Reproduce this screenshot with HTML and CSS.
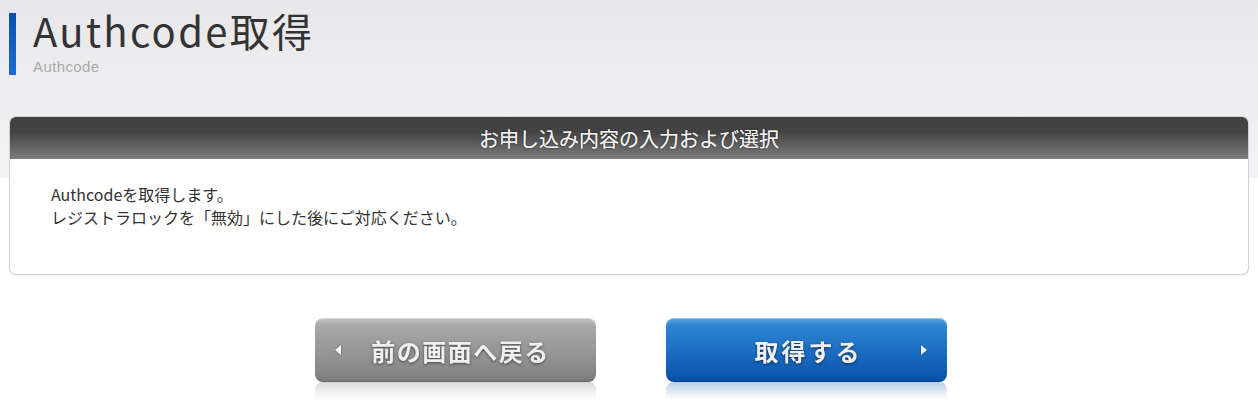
FILE: index.html
```html
<!DOCTYPE html>
<html lang="ja">
<head>
<meta charset="utf-8">
<title>Authcode取得</title>
<link rel="stylesheet" href="styles.css">
</head>
<body>
<div class="page">
  <header class="page-head">
    <div class="title-bar"></div>
    <div class="titles">
      <h1 class="title">Authcode取得</h1>
      <p class="subtitle">Authcode</p>
    </div>
  </header>

  <section class="panel">
    <h2 class="panel-head">お申し込み内容の入力および選択</h2>
    <div class="panel-body">
      <p>Authcodeを取得します。</p>
      <p>レジストラロックを「無効」にした後にご対応ください。</p>
    </div>
  </section>

  <div class="actions">
    <button class="btn btn-back" type="button">
      <svg class="arrow arrow-left" width="6" height="10" viewBox="0 0 6 10"><path d="M6 0 L0 5 L6 10 Z" fill="#f4f4f4"/></svg>
      <span class="btn-label">前の画面へ戻る</span>
    </button>
    <button class="btn btn-go" type="button">
      <span class="btn-label">取得する</span>
      <svg class="arrow arrow-right" width="6" height="10" viewBox="0 0 6 10"><path d="M0 0 L6 5 L0 10 Z" fill="#f4f4f4"/></svg>
    </button>
  </div>
</div>
</body>
</html>
```

FILE: styles.css
```css
html, body {
  margin: 0;
  padding: 0;
}

body {
  width: 1258px;
  height: 404px;
  overflow: hidden;
  background: #fff linear-gradient(to bottom, #e8e8eb 0px, #f3f3f5 178px, #ffffff 178px) no-repeat;
  font-family: "Noto Sans CJK JP", "Noto Sans", sans-serif;
  color: #333;
}

.page {
  display: flex;
  flex-direction: column;
}

.page-head {
  display: flex;
  align-items: flex-start;
  padding: 13px 0 0 9px;
  height: 117px;
  box-sizing: border-box;
}

.title-bar {
  width: 7px;
  height: 62px;
  background: linear-gradient(to bottom, #0a4fb0, #1a6ed0);
  flex: none;
}

.titles {
  margin-left: 17px;
  display: flex;
  flex-direction: column;
}

.title {
  margin: -3px 0 0;
  font-size: 40px;
  line-height: 40px;
  font-weight: normal;
  letter-spacing: 2.3px;
  color: #333;
}

.subtitle {
  margin: 8px 0 0;
  font-family: "Liberation Sans", "Noto Sans", sans-serif;
  font-size: 15px;
  line-height: 18px;
  color: #a9a9a9;
  letter-spacing: 0.4px;
}

.panel {
  margin: 0 10px;
  width: 1238px;
  box-sizing: border-box;
  border-radius: 6px;
  background: #fff;
  box-shadow: 0 0 0 1px #d4d4d4, 0 1px 2px rgba(0, 0, 0, 0.15);
  overflow: hidden;
}

.panel-head {
  margin: 0;
  height: 42px;
  display: flex;
  align-items: center;
  justify-content: center;
  background: linear-gradient(to bottom, #414141 0%, #444444 35%, #7c7c7c 100%);
  color: #f4f4f4;
  font-size: 20px;
  font-weight: normal;
  letter-spacing: 0;
  text-shadow: 0 0 2px rgba(0, 0, 0, 0.7), 0 0 0.4px #fff;
}

.panel-body {
  padding: 24px 41px 45px;
  font-size: 16px;
  line-height: 23px;
  color: #333;
}

.panel-body p {
  margin: 0;
}

.actions {
  display: flex;
  justify-content: center;
  gap: 70px;
  margin-top: 44px;
  padding-left: 4px;
}

.btn {
  width: 281px;
  height: 64px;
  border: none;
  border-radius: 8px;
  display: flex;
  align-items: center;
  padding: 0 20px;
  box-sizing: border-box;
  font-family: "Noto Sans CJK JP", "Noto Sans", sans-serif;
  font-size: 24px;
  font-weight: bold;
  letter-spacing: 1.5px;
  color: #f0f0f0;
  text-shadow: 0 1px 3px rgba(0, 0, 0, 0.55);
  -webkit-box-reflect: below 0px linear-gradient(to bottom, transparent 72%, rgba(0, 0, 0, 0.28));
}

.btn-label {
  flex: 1;
  text-align: center;
}

.btn-back {
  background: linear-gradient(to bottom, #c4c4c4 0%, #a8a8a8 12%, #979797 50%, #878787 85%, #777777 100%);
  box-shadow: inset 0 1px 0 rgba(255, 255, 255, 0.35), inset 0 -1px 0 rgba(0, 0, 0, 0.15);
}

.btn-back .btn-label {
  margin-left: 4px;
}

.btn-go {
  background: linear-gradient(to bottom, #58a4e2 0%, #2e84d2 12%, #1d6fc3 50%, #0e5ab2 85%, #094ca3 100%);
  box-shadow: inset 0 1px 0 rgba(255, 255, 255, 0.35), inset 0 -1px 0 rgba(0, 0, 0, 0.15);
}

.btn-go .btn-label {
  margin-left: 10px;
  letter-spacing: 3px;
}

.arrow {
  flex: none;
  filter: drop-shadow(0 0 1px rgba(0, 0, 0, 0.4));
}
```
